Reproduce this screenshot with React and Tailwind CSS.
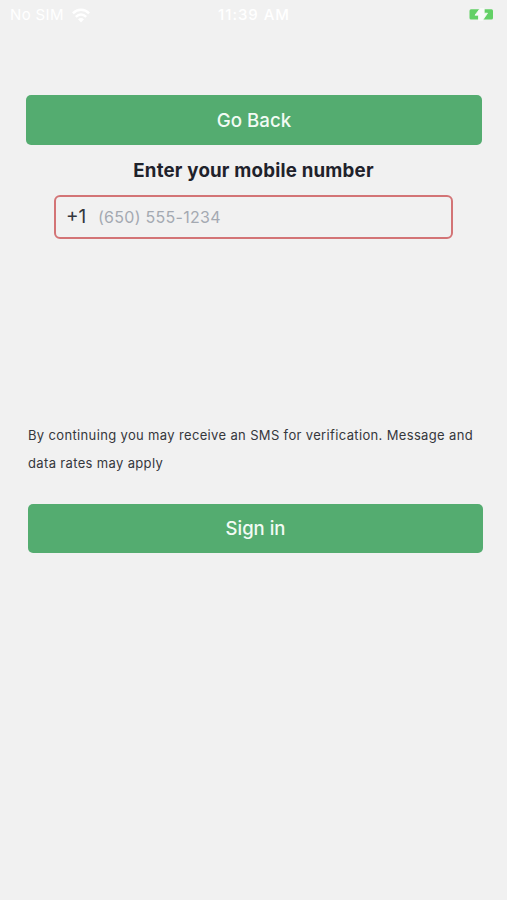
const font = "font-['Inter','Liberation_Sans',sans-serif]";

function StatusBar() {
  return (
    <header className="flex h-[30px] items-center justify-between pl-[10px] pr-[12px] text-[15px] text-white">
      <div className="flex w-[120px] items-center gap-[8px]">
        <span className="whitespace-nowrap tracking-[0.35px]">No SIM</span>
        <svg width="18" height="15" viewBox="0 0 18 15" fill="none" stroke="white" strokeWidth="2.5">
          <path d="M.9 5.3C5.5 .7 12.5 .7 17.1 5.3M3.8 8.8C7 5.8 11 5.8 14.2 8.8" />
          <path d="M6 11.2C8 9.6 10 9.6 12 11.2L9 14.4Z" fill="white" stroke="none" />
        </svg>
      </div>
      <span className="whitespace-nowrap pl-[3px] font-medium tracking-[0.95px]">11:39 AM</span>
      <div className="flex w-[120px] justify-end">
        <svg width="26" height="14" viewBox="0 0 26 14" className="-translate-y-px">
          <rect x="0.5" y="2.2" width="23.5" height="10.3" rx="1.5" fill="#62d065" />
          <path d="M11 1.5L6 8.2h3.5V13.5h4L18.5 6.2H15.2V1.5z" fill="#f7faf7" stroke="#f7faf7" strokeWidth="0.8" />
        </svg>
      </div>
    </header>
  );
}

export default function App() {
  return (
    <main className={`flex h-[900px] w-[507px] flex-col overflow-hidden bg-[#f1f1f1] text-[#1f2430] ${font}`}>
      <StatusBar />
      <button className="ml-[26px] mt-[65px] h-[50px] w-[456px] rounded-[5px] bg-[#54ac70] pt-[2px] text-[18.7px] font-medium text-[#f2fbf4]">Go Back</button>
      <h1 className="mt-[12px] text-center text-[18.7px] font-bold leading-7 tracking-[0.2px] text-[#1f222b]">Enter your mobile number</h1>
      <div className="ml-[54px] mt-[10px] flex h-[44px] w-[399px] items-center rounded-[6px] border-2 border-[#d37476] pl-[10px] text-[#33363c]">
        <span className="w-[32px] pt-px text-[19px]">+1</span>
        <span className="text-[16px] tracking-[0.28px] text-[#a4a9b1]">(650) 555-1234</span>
      </div>
      <p className="ml-[28px] mt-[182px] w-[460px] text-[13px] leading-7 tracking-[0.35px] text-[#35373c]">
        By continuing you may receive an SMS for verification. Message and<br />data rates may apply
      </p>
      <button className="ml-[28px] mt-[27px] h-[49px] w-[455px] rounded-[5px] bg-[#54ac70] pt-px text-[18.5px] font-medium text-[#f2fbf4]">Sign in</button>
    </main>
  );
}
